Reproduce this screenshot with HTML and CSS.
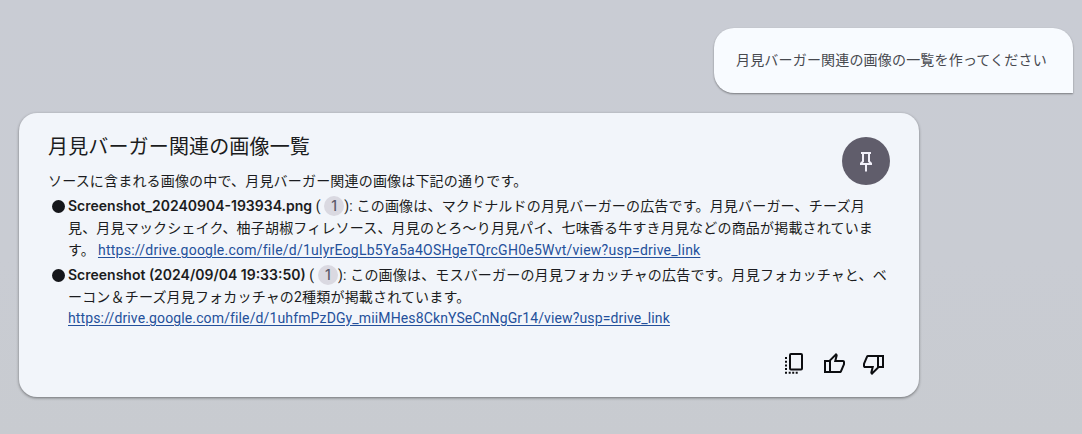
FILE: index.html
```html
<!DOCTYPE html>
<html lang="ja">
<head>
    <meta charset="UTF-8">
    <meta name="viewport" content="width=device-width, initial-scale=1.0">
    <title>月見バーガー関連の画像一覧</title>
    <link rel="stylesheet" href="styles.css">
</head>
<body>

    <main class="chat">
        <div class="question">月見バーガー関連の画像の一覧を作ってください</div>

        <div class="answer">
            <div class="answer-top">
                <div class="answer-intro">
                    <h1>月見バーガー関連の画像一覧</h1>
                    <p>ソースに含まれる画像の中で、月見バーガー関連の画像は下記の通りです。</p>
                </div>
                <button class="pin" aria-label="ピン">
                    <svg viewBox="0 -960 960 960" width="24" height="24"><path fill="currentColor" d="m640-480 80 80v80H520v240l-40 40-40-40v-240H240v-80l80-80v-280h-40v-80h400v80h-40v280Zm-286 80h252l-46-46v-314H400v314l-46 46Z"/></svg>
                </button>
            </div>

            <ul class="sources">
                <li>
                    <span class="line"><b class="file-a">Screenshot_20240904-193934.png</b> ( <span class="cite">1</span>): この画像は、マクドナルドの月見バーガーの広告です。月見バーガー、チーズ月</span>
                    <span class="line">見、月見マックシェイク、柚子胡椒フィレソース、月見のとろ〜り月見パイ、七味香る牛すき月見などの商品が掲載されていま</span>
                    <span class="line">す。<a class="link-a" href="https://drive.google.com/file/d/1ulyrEogLb5Ya5a4OSHgeTQrcGH0e5Wvt/view?usp=drive_link">https://drive.google.com/file/d/1ulyrEogLb5Ya5a4OSHgeTQrcGH0e5Wvt/view?usp=drive_link</a></span>
                </li>
                <li>
                    <span class="line"><b class="file-b">Screenshot (2024/09/04 19:33:50)</b> ( <span class="cite">1</span>): この画像は、モスバーガーの月見フォカッチャの広告です。月見フォカッチャと、ベ</span>
                    <span class="line">ーコン＆チーズ月見フォカッチャの2種類が掲載されています。</span>
                    <span class="line last"><a class="link-b" href="https://drive.google.com/file/d/1uhfmPzDGy_miiMHes8CknYSeCnNgGr14/view?usp=drive_link">https://drive.google.com/file/d/1uhfmPzDGy_miiMHes8CknYSeCnNgGr14/view?usp=drive_link</a></span>
                </li>
            </ul>

            <div class="actions">
                <svg viewBox="0 0 24 24" width="24" height="24"><rect x="8" y="2" width="12" height="15.500" rx="1" fill="none" stroke="currentColor" stroke-width="2"/><path fill="currentColor" d="M3 5h2v2H3zM3 8.700h2v2H3zM3 12.400h2v2H3zM3 16.100h2v2H3zM3 19.800h2v2H3zM6.700 19.800h2v2h-2zM10.200 19.800h2v2h-2zM13.700 19.800h2v2h-2z"/></svg>
                <svg viewBox="0 -960 960 960" width="24" height="24"><path fill="currentColor" d="M720-120H280v-520l280-280 50 50q7 7 11.500 19t4.500 23v14l-44 174h258q32 0 56 24t24 56v80q0 7-2 15t-4 15L794-168q-9 20-30 34t-44 14Zm-360-80h360l120-280v-80H480l54-220-174 174v406Zm-80-440v80H160v360h120v80H80v-520h200Z"/></svg>
                <svg viewBox="0 -960 960 960" width="24" height="24"><path fill="currentColor" transform="rotate(180 480 -480)" d="M720-120H280v-520l280-280 50 50q7 7 11.500 19t4.500 23v14l-44 174h258q32 0 56 24t24 56v80q0 7-2 15t-4 15L794-168q-9 20-30 34t-44 14Zm-360-80h360l120-280v-80H480l54-220-174 174v406Zm-80-440v80H160v360h120v80H80v-520h200Z"/></svg>
            </div>
        </div>
    </main>

</body>
</html>
```
FILE: styles.css
```css
* {
    box-sizing: border-box;
}

body {
    margin: 0;
    height: 434px;
    overflow: hidden;
    background: linear-gradient(#c9ccd4, #c9ccd3 60%, #c8cbd0);
    font-family: Roboto, "Noto Sans CJK JP", sans-serif;
    font-size: 14px;
    letter-spacing: 0.18px;
    color: #1b1c20;
}

.chat {
    display: flex;
    flex-direction: column;
    gap: 20px;
    padding: 28px 9px 0 19px;
}

.question {
    align-self: flex-end;
    width: 359px;
    height: 65px;
    padding-left: 22px;
    line-height: 65px;
    border-radius: 20px 20px 0 20px;
    background: #f8fbff;
    color: #47494f;
    box-shadow: 0 1px 2px rgba(0, 0, 0, 0.4);
}

.answer {
    width: 900px;
    height: 284px;
    padding: 20px 29px 0;
    border-radius: 18px;
    background: #f2f5fa;
    box-shadow: 0 1px 3px rgba(0, 0, 0, 0.45);
}

.answer-top {
    display: flex;
    justify-content: space-between;
    height: 62px;
}

h1 {
    margin: 0;
    font-size: 20px;
    font-weight: 400;
    line-height: 28px;
    letter-spacing: 0.15px;
}

p {
    margin: 9px 0 0;
    line-height: 22px;
}

.pin {
    display: flex;
    align-items: center;
    justify-content: center;
    width: 48px;
    height: 48px;
    margin-top: 4px;
    padding: 0;
    border: none;
    border-radius: 50%;
    background: #605d6b;
    color: #f2f0fa;
}

.sources {
    display: flex;
    flex-direction: column;
    gap: 3px;
    margin: 0;
    padding: 0 0 0 20px;
    list-style: none;
}

.sources li {
    position: relative;
}

.sources li::before {
    content: "";
    position: absolute;
    left: -16px;
    top: 5px;
    width: 13px;
    height: 13px;
    border-radius: 50%;
    background: #15161a;
}

.line {
    display: block;
    height: 22px;
    line-height: 22px;
    white-space: nowrap;
}

.last {
    margin-top: -1px;
}

b {
    font-family: Inter, sans-serif;
    font-size: 14px;
    font-weight: 600;
    letter-spacing: 0;
}

.cite {
    display: inline-block;
    width: 20px;
    height: 20px;
    border-radius: 50%;
    line-height: 20px;
    text-align: center;
    font-family: Inter, sans-serif;
    font-weight: 500;
    background: #dad9e1;
    color: #5e5c6b;
}

a {
    color: #24509b;
    text-underline-offset: 2px;
}

.link-a {
    margin-left: 3px;
    letter-spacing: 0.24px;
}

.link-b {
    letter-spacing: 0.13px;
}

.actions {
    display: flex;
    justify-content: flex-end;
    gap: 16px;
    margin-top: 23px;
    padding-right: 4px;
    color: #0c0d10;
}
```
